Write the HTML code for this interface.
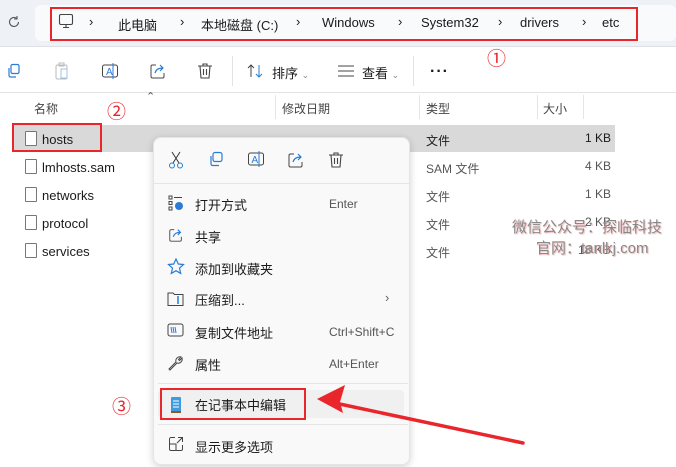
<!DOCTYPE html>
<html><head><meta charset="utf-8"><style>
*{margin:0;padding:0;box-sizing:border-box}
body{width:676px;height:467px;overflow:hidden;background:#fff;position:relative;font-family:"Liberation Sans","Noto Sans CJK SC",sans-serif;font-size:13px;color:#1a1a1a}
.a{position:absolute;white-space:nowrap}
.red{color:#e8262b}
.file{position:absolute;width:12px;height:15px;border:1px solid #777;background:#fff;border-radius:1px}
.mi{position:absolute;left:195px;font-size:13px}
.sc{position:absolute;left:329px;font-size:12px;color:#555}
.ic{position:absolute}
</style></head><body>
<div class="a" style="left:0;top:0;width:676px;height:46px;background:#eef2f7"></div>
<div class="a" style="left:0;top:46px;width:676px;height:1px;background:#dde1e6"></div>
<div class="a" style="left:35px;top:5px;width:641px;height:36px;background:#f9fafc;border-radius:6px"></div>
<svg class="ic" style="left:7px;top:15px" width="14" height="14" viewBox="0 0 14 14"><path d="M11.5 7a4.5 4.5 0 1 1-1.5-3.4M10 1v3h-3" fill="none" stroke="#555" stroke-width="1.1"/></svg>
<div class="a" style="left:50px;top:7px;width:588px;height:34px;border:2px solid #e8262b"></div>
<svg class="ic" style="left:58px;top:13px" width="16" height="16" viewBox="0 0 16 16"><rect x="1.5" y="1.5" width="13" height="10" rx="1.5" fill="none" stroke="#444" stroke-width="1.1"/><path d="M5 14.5h6M8 11.5v3" stroke="#444" stroke-width="1.1"/></svg>
<div class="a" style="top:14px;left:89px">›</div>
<div class="a" style="top:15px;left:118px">此电脑</div>
<div class="a" style="top:14px;left:180px">›</div>
<div class="a" style="top:15px;left:201px">本地磁盘 (C:)</div>
<div class="a" style="top:14px;left:296px">›</div>
<div class="a" style="top:15px;left:322px">Windows</div>
<div class="a" style="top:14px;left:398px">›</div>
<div class="a" style="top:15px;left:421px">System32</div>
<div class="a" style="top:14px;left:498px">›</div>
<div class="a" style="top:15px;left:520px">drivers</div>
<div class="a" style="top:14px;left:582px">›</div>
<div class="a" style="top:15px;left:602px">etc</div>
<div class="a red" style="top:44px;left:487px;font-size:19px">①</div>
<!-- toolbar -->
<svg class="ic" style="left:6px;top:63px" width="16" height="16" viewBox="0 0 16 16"><rect x="5" y="1.5" width="8" height="9" rx="1.5" fill="none" stroke="#2a7bd6" stroke-width="1.2"/><path d="M3 5v7.5a1.5 1.5 0 0 0 1.5 1.5H10" fill="none" stroke="#2a7bd6" stroke-width="1.2"/></svg>
<svg class="ic" style="left:54px;top:62px" width="16" height="18" viewBox="0 0 16 18"><rect x="2" y="3" width="11" height="14" rx="1.5" fill="none" stroke="#bbb"/><rect x="5" y="1" width="5" height="3" fill="none" stroke="#bbb"/><rect x="7" y="7" width="6" height="9" fill="none" stroke="#9cc4ee"/></svg>
<svg class="ic" style="left:101px;top:62px" width="18" height="18" viewBox="0 0 18 18"><rect x="1.5" y="3" width="15" height="12" rx="2" fill="none" stroke="#444"/><text x="5" y="13" font-size="10" fill="#2a7bd6" font-family="Liberation Sans">A</text><path d="M12 1v16" stroke="#2a7bd6"/></svg>
<svg class="ic" style="left:149px;top:62px" width="18" height="18" viewBox="0 0 18 18"><path d="M7 3H3.5A1.5 1.5 0 0 0 2 4.5v10A1.5 1.5 0 0 0 3.5 16h10a1.5 1.5 0 0 0 1.5-1.5V11" fill="none" stroke="#444"/><path d="M6 11c1-4 4-5 8-5M11 3l3 3-3 3" fill="none" stroke="#2a7bd6" stroke-width="1.2"/></svg>
<svg class="ic" style="left:197px;top:62px" width="16" height="18" viewBox="0 0 16 18"><path d="M1 4h14M6 4V2h4v2M3 4l1 12h8l1-12M6.5 7v6M9.5 7v6" fill="none" stroke="#444" stroke-width="1.1"/></svg>
<div class="a" style="left:232px;top:56px;width:1px;height:30px;background:#e3e3e3"></div>
<svg class="ic" style="left:246px;top:63px" width="20" height="16" viewBox="0 0 20 16"><path d="M5 14V2M2 5l3-3 3 3" fill="none" stroke="#444"/><path d="M13 2v12M10 11l3 3 3-3" fill="none" stroke="#2a7bd6"/></svg>
<div class="a" style="left:272px;top:63px">排序 <span style="font-size:9px;color:#888">⌄</span></div>
<svg class="ic" style="left:337px;top:64px" width="18" height="14"><path d="M1 2h16M1 7h16M1 12h16" stroke="#444"/></svg>
<div class="a" style="left:362px;top:63px">查看 <span style="font-size:9px;color:#888">⌄</span></div>
<div class="a" style="left:413px;top:56px;width:1px;height:30px;background:#e3e3e3"></div>
<div class="a" style="left:430px;top:63px;font-size:16px;font-weight:bold;letter-spacing:1px">···</div>
<div class="a" style="left:0;top:92px;width:676px;height:1px;background:#e3e3e3"></div>
<!-- header -->
<div class="a" style="left:146px;top:90px;font-size:11px;color:#555">⌃</div>
<div class="a" style="left:34px;top:100px;font-size:12px;color:#444">名称</div>
<div class="a red" style="left:107px;top:97px;font-size:19px">②</div>
<div class="a" style="left:275px;top:95px;width:1px;height:24px;background:#e5e5e5"></div>
<div class="a" style="left:282px;top:100px;font-size:12px;color:#444">修改日期</div>
<div class="a" style="left:419px;top:95px;width:1px;height:24px;background:#e5e5e5"></div>
<div class="a" style="left:426px;top:100px;font-size:12px;color:#444">类型</div>
<div class="a" style="left:537px;top:95px;width:1px;height:24px;background:#e5e5e5"></div>
<div class="a" style="left:543px;top:100px;font-size:12px;color:#444">大小</div>
<div class="a" style="left:583px;top:95px;width:1px;height:24px;background:#e5e5e5"></div>
<!-- rows -->
<div class="a" style="left:12px;top:125px;width:603px;height:27px;background:#d9d9d9"></div>
<div class="a" style="left:12px;top:123px;width:90px;height:29px;border:2px solid #e8262b"></div>
<div class="file" style="left:25px;top:131px"></div><div class="a" style="left:42px;top:132px">hosts</div>
<div class="file" style="left:25px;top:159px"></div><div class="a" style="left:42px;top:160px">lmhosts.sam</div>
<div class="file" style="left:25px;top:187px"></div><div class="a" style="left:42px;top:188px">networks</div>
<div class="file" style="left:25px;top:215px"></div><div class="a" style="left:42px;top:216px">protocol</div>
<div class="file" style="left:25px;top:243px"></div><div class="a" style="left:42px;top:244px">services</div>
<div class="a" style="left:426px;top:132px;font-size:12px">文件</div><div class="a" style="left:585px;top:131px;font-size:12px">1 KB</div>
<div class="a" style="left:426px;top:160px;font-size:12px;color:#555">SAM 文件</div><div class="a" style="left:585px;top:159px;font-size:12px;color:#555">4 KB</div>
<div class="a" style="left:426px;top:188px;font-size:12px;color:#555">文件</div><div class="a" style="left:585px;top:187px;font-size:12px;color:#555">1 KB</div>
<div class="a" style="left:426px;top:216px;font-size:12px;color:#555">文件</div><div class="a" style="left:585px;top:215px;font-size:12px;color:#555">2 KB</div>
<div class="a" style="left:426px;top:244px;font-size:12px;color:#555">文件</div><div class="a" style="left:578px;top:243px;font-size:12px;color:#555">18 KB</div>
<div class="a" style="left:512px;top:216px;font-size:15px;color:#888;text-shadow:1px 1px 1px #f3b8bb">微信公众号：探临科技</div>
<div class="a" style="left:536px;top:237px;font-size:15px;color:#888;text-shadow:1px 1px 1px #f3b8bb">官网：tanlkj.com</div>
<!-- menu -->
<div class="a" style="left:153px;top:137px;width:257px;height:328px;background:#f9f9f9;border-radius:8px;box-shadow:0 2px 8px rgba(0,0,0,.18);border:1px solid #e5e5e5"></div>
<svg class="ic" style="left:168px;top:151px" width="16" height="18" viewBox="0 0 16 18"><path d="M4 1l7 11M12 1L5 12" stroke="#333"/><circle cx="4" cy="14.5" r="2.5" fill="none" stroke="#2a7bd6"/><circle cx="12" cy="14.5" r="2.5" fill="none" stroke="#2a7bd6"/></svg>
<svg class="ic" style="left:208px;top:151px" width="16" height="16" viewBox="0 0 16 16"><rect x="5" y="1.5" width="9" height="9" rx="2" fill="none" stroke="#2a7bd6" stroke-width="1.2"/><path d="M3 5v8a1.5 1.5 0 0 0 1.5 1.5H11" fill="none" stroke="#2a7bd6" stroke-width="1.2"/></svg>
<svg class="ic" style="left:247px;top:150px" width="18" height="18" viewBox="0 0 18 18"><rect x="1.5" y="3" width="15" height="12" rx="2" fill="none" stroke="#444"/><text x="4.5" y="13" font-size="10" fill="#2a7bd6" font-family="Liberation Sans">A</text><path d="M12 1v16" stroke="#2a7bd6"/></svg>
<svg class="ic" style="left:287px;top:151px" width="18" height="18" viewBox="0 0 18 18"><path d="M7 3H3.5A1.5 1.5 0 0 0 2 4.5v10A1.5 1.5 0 0 0 3.5 16h10a1.5 1.5 0 0 0 1.5-1.5V11" fill="none" stroke="#444"/><path d="M6 11c1-4 4-5 8-5M11 3l3 3-3 3" fill="none" stroke="#2a7bd6" stroke-width="1.2"/></svg>
<svg class="ic" style="left:328px;top:151px" width="16" height="18" viewBox="0 0 16 18"><path d="M1 4h14M6 4V2h4v2M3 4l1 12h8l1-12M6.5 7v6M9.5 7v6" fill="none" stroke="#444" stroke-width="1.1"/></svg>
<div class="a" style="left:154px;top:183px;width:255px;height:1px;background:#e5e5e5"></div>
<svg class="ic" style="left:168px;top:195px" width="16" height="16" viewBox="0 0 16 16"><rect x="1" y="1" width="3" height="3" fill="none" stroke="#444"/><rect x="1" y="6.5" width="3" height="3" fill="none" stroke="#444"/><rect x="1" y="12" width="3" height="3" fill="none" stroke="#444"/><path d="M6 2.5h8" stroke="#444"/><circle cx="11" cy="11" r="4" fill="#2a7bd6"/></svg>
<div class="mi" style="top:195px">打开方式</div><div class="sc" style="top:197px">Enter</div>
<svg class="ic" style="left:168px;top:227px" width="16" height="16" viewBox="0 0 18 18"><path d="M7 3H3.5A1.5 1.5 0 0 0 2 4.5v10A1.5 1.5 0 0 0 3.5 16h10a1.5 1.5 0 0 0 1.5-1.5V11" fill="none" stroke="#444"/><path d="M6 11c1-4 4-5 8-5M11 3l3 3-3 3" fill="none" stroke="#2a7bd6" stroke-width="1.3"/></svg>
<div class="mi" style="top:227px">共享</div>
<svg class="ic" style="left:167px;top:258px" width="18" height="17" viewBox="0 0 18 17"><path d="M9 1l2.3 5 5.2.5-4 3.6 1.2 5.3L9 12.7l-4.7 2.7 1.2-5.3-4-3.6 5.2-.5z" fill="none" stroke="#2a7bd6" stroke-width="1.2"/></svg>
<div class="mi" style="top:259px">添加到收藏夹</div>
<svg class="ic" style="left:167px;top:291px" width="17" height="15" viewBox="0 0 17 15"><path d="M1 2h5l1.5 1.5H16v11H1z" fill="none" stroke="#444"/><path d="M11 5v8" stroke="#2a7bd6" stroke-width="1.5"/></svg>
<div class="mi" style="top:290px">压缩到...</div><div class="a" style="left:385px;top:290px;color:#666">›</div>
<svg class="ic" style="left:167px;top:323px" width="17" height="14" viewBox="0 0 17 14"><rect x="1" y="1" width="15" height="12" rx="2" fill="none" stroke="#444"/><path d="M4 4l1 6M6 4l1 6M8 4l1 6" stroke="#2a7bd6"/></svg>
<div class="mi" style="top:323px">复制文件地址</div><div class="sc" style="top:325px">Ctrl+Shift+C</div>
<svg class="ic" style="left:167px;top:354px" width="17" height="17" viewBox="0 0 17 17"><path d="M2 15l7-7a4 4 0 0 1 5-5l-2.5 2.5 1 1L15 4a4 4 0 0 1-5 5l-7 7z" fill="none" stroke="#444"/></svg>
<div class="mi" style="top:355px">属性</div><div class="sc" style="top:357px">Alt+Enter</div>
<div class="a" style="left:158px;top:383px;width:250px;height:1px;background:#e5e5e5"></div>
<div class="a" style="left:158px;top:390px;width:246px;height:28px;background:#f0f0f0;border-radius:4px"></div>
<svg class="ic" style="left:170px;top:396px" width="12" height="17" viewBox="0 0 12 17"><rect x="1" y="1" width="10" height="15" rx="1" fill="#3f9be0"/><path d="M3 5h6M3 8h6M3 11h6" stroke="#fff"/><rect x="1" y="15" width="10" height="2" fill="#8a5a2b"/></svg>
<div class="mi" style="top:395px">在记事本中编辑</div>
<div class="a" style="left:160px;top:388px;width:146px;height:32px;border:2px solid #e8262b"></div>
<div class="a red" style="left:112px;top:392px;font-size:19px">③</div>
<div class="a" style="left:158px;top:424px;width:250px;height:1px;background:#e5e5e5"></div>
<svg class="ic" style="left:168px;top:436px" width="16" height="16" viewBox="0 0 16 16"><path d="M7 1.5H3A1.5 1.5 0 0 0 1.5 3v10A1.5 1.5 0 0 0 3 14.5h10a1.5 1.5 0 0 0 1.5-1.5V9M1.5 8h6.5v6.5M10 1.5h4.5V6M14.5 1.5L9 7" fill="none" stroke="#444"/></svg>
<div class="mi" style="top:437px">显示更多选项</div>
<!-- arrow -->
<svg class="ic" style="left:0;top:0" width="676" height="467"><path d="M523 443L335 403" stroke="#e8262b" stroke-width="3.5" stroke-linecap="round"/><path d="M317 399l28-14-5 17 3 11z" fill="#e8262b"/></svg>
</body></html>
